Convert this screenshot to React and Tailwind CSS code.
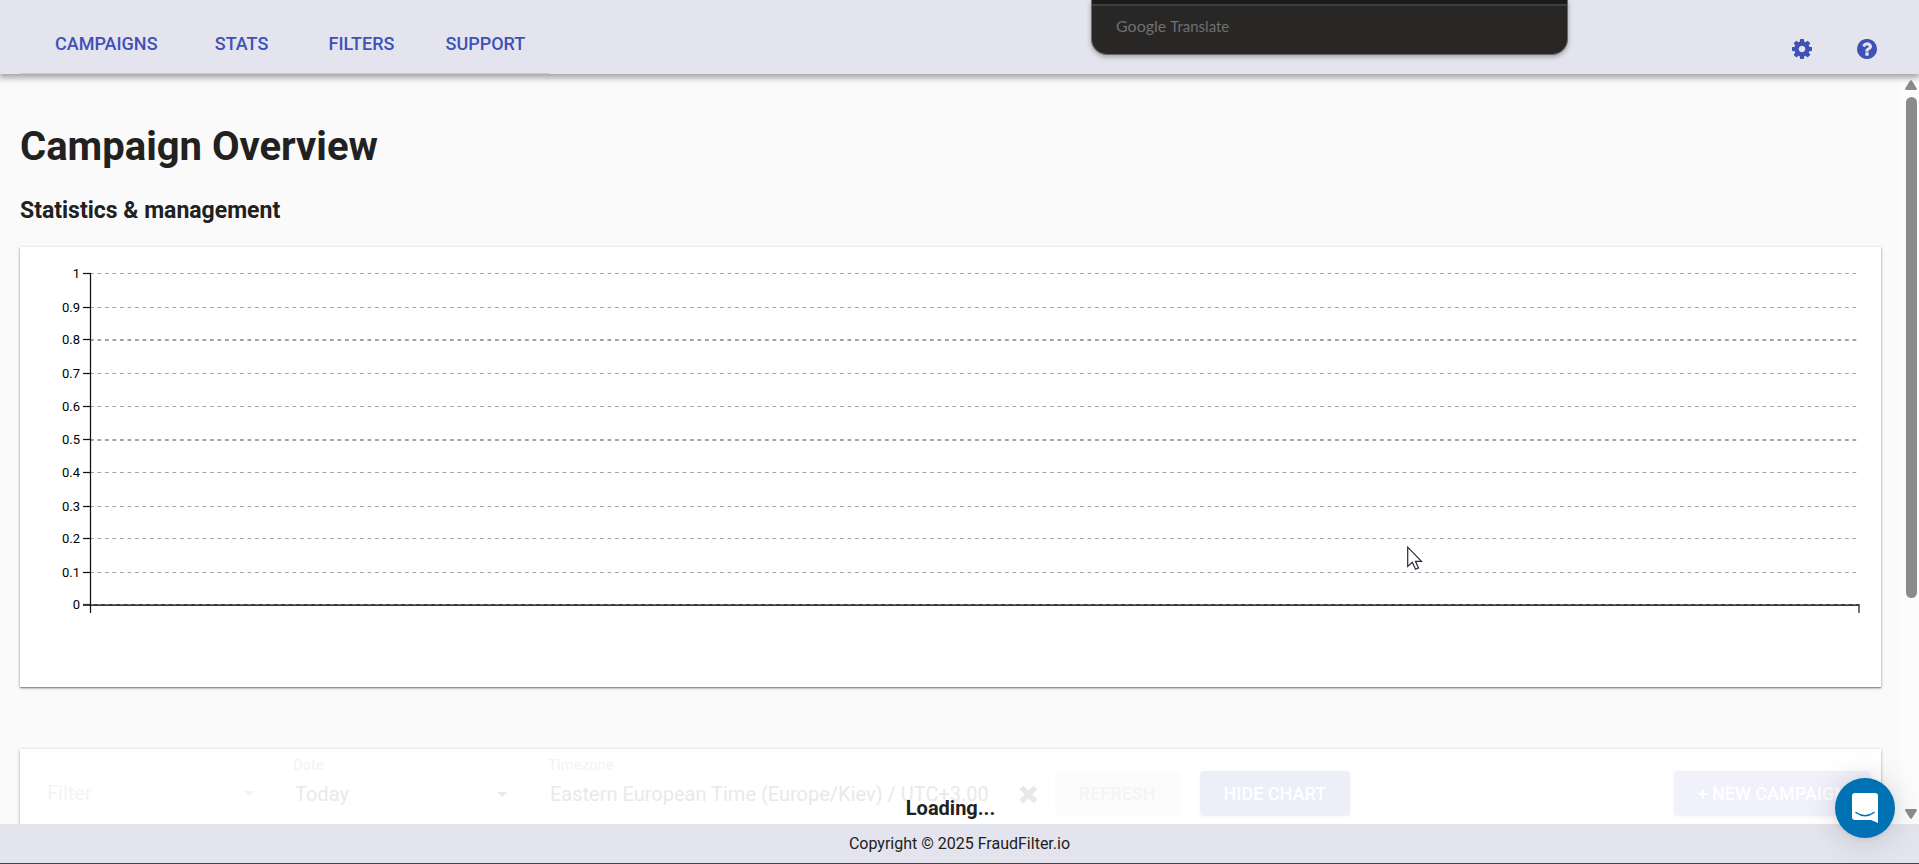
const NAV_ITEMS = ["Campaigns", "Stats", "Filters", "Support"];

// y positions of the horizontal grid lines, in chart units
const TICKS = [
  { label: "1", y: 8 },
  { label: "0.9", y: 42 },
  { label: "0.8", y: 74, width: 2 },
  { label: "0.7", y: 108 },
  { label: "0.6", y: 141 },
  { label: "0.5", y: 174, width: 2 },
  { label: "0.4", y: 207 },
  { label: "0.3", y: 241 },
  { label: "0.2", y: 273 },
  { label: "0.1", y: 307 },
  { label: "0", y: 339 },
];

function CogIcon() {
  return (
    <svg viewBox="128 128 1536 1536" className="size-5" fill="currentColor" aria-hidden="true">
      <path d="M1152 896q0-106-75-181t-181-75-181 75-75 181 75 181 181 75 181-75 75-181zm512-109v222q0 12-8 23t-20 13l-185 28q-19 54-39 91 35 50 107 138 10 12 10 25t-9 23q-27 37-99 108t-94 71q-12 0-26-9l-138-108q-44 23-91 38-16 136-29 186-7 28-36 28h-222q-14 0-24.500-8.500t-11.500-21.500l-28-184q-49-16-90-37l-141 107q-10 9-25 9-14 0-25-11-126-114-165-168-7-10-7-23 0-12 8-23 15-21 51-66.500t54-70.500q-27-50-41-99l-183-27q-13-2-21-12.500t-8-23.500v-222q0-12 8-23t19-13l186-28q14-46 39-92-40-57-107-138-10-12-10-24 0-10 9-23 26-36 98.500-107.500t94.500-71.500q13 0 26 10l138 107q44-23 91-38 16-136 29-186 7-28 36-28h222q14 0 24.500 8.500t11.500 21.500l28 184q49 16 90 37l142-107q9-9 24-9 13 0 25 10 129 119 165 170 7 8 7 22 0 12-8 23-15 21-51 66.500t-54 70.500q26 50 41 98l183 28q13 2 21 12.500t8 23.500z" />
    </svg>
  );
}

function HelpIcon() {
  return (
    <svg viewBox="128 128 1536 1536" className="size-5" fill="currentColor" aria-hidden="true">
      <path d="M1024 1376v-192q0-14-9-23t-23-9h-192q-14 0-23 9t-9 23v192q0 14 9 23t23 9h192q14 0 23-9t9-23zm256-672q0-88-55.500-163t-138.500-116-170-41q-243 0-371 213-15 24 8 42l132 100q7 6 19 6 16 0 25-12 53-68 86-92 34-24 86-24 48 0 85.500 26t37.500 59q0 38-20 61t-68 45q-63 28-115.500 86.500t-52.500 125.500v36q0 14 9 23t23 9h192q14 0 23-9t9-23q0-19 21.500-49.500t54.500-49.500q32-18 49-28.500t46-35 44.500-48 28-60.500 12.500-81zm384 192q0 209-103 385.500t-279.500 279.500-385.500 103-385.500-103-279.500-279.500-103-385.500 103-385.500 279.500-279.500 385.500-103 385.500 103 279.500 279.500 103 385.500z" />
    </svg>
  );
}

function ClearIcon() {
  return (
    <svg viewBox="302 366 1188 1188" className="size-[17px]" fill="currentColor" aria-hidden="true">
      <path d="M1490 1322q0 40-28 68l-136 136q-28 28-68 28t-68-28l-294-294-294 294q-28 28-68 28t-68-28l-136-136q-28-28-28-68t28-68l294-294-294-294q-28-28-28-68t28-68l136-136q28-28 68-28t68 28l294 294 294-294q28-28 68-28t68 28l136 136q28 28 28 68t-28 68l-294 294 294 294q28 28 28 68z" />
    </svg>
  );
}

function CaretIcon() {
  return (
    <svg viewBox="0 0 10 5" className="pointer-events-none h-[5px] w-2.5" fill="currentColor" aria-hidden="true">
      <path d="M0 0h10l-5 5z" />
    </svg>
  );
}

function Header() {
  return (
    <header className="relative z-10 flex h-[74px] shrink-0 items-end justify-between bg-[#e4e4ee] pr-[42px] pl-5 shadow-[0_3px_6px_1px_rgba(0,0,0,0.34)]">
      <nav className="flex h-[60px] border-b border-[#c8c8ce] pl-[11px]">
        {NAV_ITEMS.map((item) => (
          <a
            key={item}
            href="#"
            className="flex min-w-[120px] justify-center px-6 pt-[18px] text-lg/6 font-medium text-[#3f51b5] uppercase"
          >
            {item}
          </a>
        ))}
      </nav>
      <div className="flex gap-[45px] pb-[15px] text-[#3f51b5]">
        <button type="button" aria-label="Settings">
          <CogIcon />
        </button>
        <button type="button" aria-label="Help">
          <HelpIcon />
        </button>
      </div>
      <TranslatePopup />
    </header>
  );
}

function TranslatePopup() {
  return (
    <div className="absolute top-0 right-[351px] h-[55px] w-[477px] overflow-hidden rounded-b-2xl border border-t-0 border-[#6b6867] bg-[#282725] shadow-[0_2px_5px_rgba(0,0,0,0.3)]">
      <div className="h-1.5 border-b-2 border-[#3c4043] bg-[#1c1b1a]" />
      <p className="flex items-baseline gap-1 px-6 pt-2 font-[Lato,sans-serif] leading-6 text-[#6d7075]">
        <span className="text-base/6">Google</span>
        <span className="text-[15px]/6">Translate</span>
      </p>
    </div>
  );
}

function Chart() {
  return (
    <section className="h-[440px] bg-white pt-[18px] pr-[22px] pl-10 shadow-[0_1px_3px_rgba(0,0,0,0.35),0_1px_1px_rgba(0,0,0,0.25)]">
      <svg className="h-[380px] w-full overflow-visible" role="img" aria-label="Campaign chart">
        {TICKS.map(({ label, y }) => (
          <g key={label}>
            <text x="20" y={y + 5} textAnchor="end" className="fill-black text-[13px]">
              {label}
            </text>
            <line x1="23" x2="31" y1={y + 0.5} y2={y + 0.5} stroke="#111" strokeWidth="1.25" />
          </g>
        ))}
        <line x1="23" x2="100%" y1="340" y2="340" stroke="#3a3a3c" strokeWidth="2" />
        {TICKS.map(({ label, y, width = 1 }) => (
          <line
            key={label}
            x1="30"
            x2="100%"
            y1={y + width / 2}
            y2={y + width / 2}
            stroke={label === "0" ? "#777" : "#a3a3a3"}
            strokeWidth={width}
            strokeDasharray="3.75 3.75"
          />
        ))}
        <line x1="30.5" x2="30.5" y1="8" y2="348" stroke="#111" strokeWidth="1.25" />
        <line x1="100%" x2="100%" y1="339" y2="348" stroke="#444" strokeWidth="1.5" />
      </svg>
    </section>
  );
}

function Toolbar() {
  return (
    <section className="flex h-60 items-start bg-white pt-1.5 pr-2.5 pl-[27px] text-[#e9e9e9] shadow-[0_1px_3px_rgba(0,0,0,0.35)]">
      <div className="flex w-[207px] items-center pt-6 text-[#f4f4f4]">
        <select aria-label="Filter" className="h-7 flex-1 appearance-none bg-transparent text-xl/7">
          <option>Filter</option>
        </select>
        <CaretIcon />
      </div>
      <div className="ml-[39px] w-[214px]">
        <label htmlFor="date" className="block text-[15px]/5 text-[#f3f3f3]">
          Date
        </label>
        <div className="mt-[5px] flex items-center pl-0.5">
          <select id="date" className="h-7 flex-1 appearance-none bg-transparent text-xl/7">
            <option>Today</option>
          </select>
          <CaretIcon />
        </div>
      </div>
      <div className="ml-[41px] w-[489px]">
        <label htmlFor="timezone" className="block text-[15px]/5 text-[#f3f3f3]">
          Timezone
        </label>
        <div className="mt-[5px] flex items-center pl-0.5">
          <input
            id="timezone"
            className="h-7 min-w-0 flex-1 bg-transparent text-xl/7"
            defaultValue="Eastern European Time (Europe/Kiev) / UTC+3.00"
          />
          <button type="button" aria-label="Clear timezone">
            <ClearIcon />
          </button>
        </div>
      </div>
      <div className="mt-4 flex flex-1 gap-5 pl-[18px] text-lg/6 font-medium">
        <button type="button" className="h-[45px] rounded-sm bg-[#fcfcfc] px-6 text-[#f4f4f4] uppercase">
          Refresh
        </button>
        <button
          type="button"
          className="h-[45px] rounded-sm bg-[#eceef8] px-6 text-white uppercase shadow-[0_1px_4px_rgba(0,0,0,0.04)]"
        >
          Hide chart
        </button>
        <button
          type="button"
          className="ml-auto h-[45px] rounded-sm bg-[#f1f1fb] px-6 text-white uppercase shadow-[0_1px_4px_rgba(0,0,0,0.04)]"
        >
          + New campaign
        </button>
      </div>
    </section>
  );
}

function Scrollbar() {
  return (
    <div className="flex w-[18px] shrink-0 flex-col items-center bg-[#fcfcfc] pt-1.5 pr-0.5 pb-[5px] pl-1 text-[#8b8b8b]" aria-hidden="true">
      <svg viewBox="0 0 12 10" className="h-2.5 w-3" fill="currentColor">
        <path d="M5 .8q1-1.200 2 0l4.700 7.400q.7 1.800-1 1.800H1.300q-1.700 0-1-1.800z" />
      </svg>
      <div className="flex flex-1 flex-col py-[7px]">
        <div className="h-[71%] w-[11px] rounded-full bg-[#8b8b8b]" />
      </div>
      <svg viewBox="0 0 12 10" className="h-2.5 w-3" fill="currentColor">
        <path d="M5 9.200q1 1.200 2 0l4.700-7.400q.7-1.800-1-1.800H1.300q-1.700 0-1 1.800z" />
      </svg>
    </div>
  );
}

function ChatLauncher() {
  return (
    <button
      type="button"
      aria-label="Open chat"
      className="absolute right-6 bottom-[26px] z-20 flex size-[60px] items-center justify-center rounded-full bg-[#0071b2] shadow-[0_1px_6px_rgba(0,0,0,0.06),0_2px_32px_rgba(0,0,0,0.16)]"
    >
      <svg viewBox="0 0 26 30" className="h-[30px] w-[26px]" aria-hidden="true">
        <path d="M3 0h20q3 0 3 3v27l-7-3H3q-3 0-3-3V3q0-3 3-3z" fill="#fff" />
        <path d="M4 19.500q9 6.500 18 0" fill="none" stroke="#0071b2" strokeWidth="1.5" strokeLinecap="round" />
      </svg>
    </button>
  );
}

function Cursor() {
  return (
    <svg viewBox="0 0 16 25" className="absolute top-[546px] left-[1407px] z-20 h-[25px] w-4" aria-hidden="true">
      <path
        d="M.7 1.200v19.300l4.600-4.200 3.200 7 3-1.400-3-6.600h6z"
        fill="#fff"
        stroke="#2a2a38"
        strokeWidth="1.2"
      />
    </svg>
  );
}

export default function App() {
  return (
    <div className="relative flex h-screen flex-col overflow-hidden bg-[#fafafa] font-[Roboto,sans-serif] text-[#212121]">
      <Header />
      <div className="relative flex min-h-0 flex-1">
        <main className="relative min-w-0 flex-1 overflow-hidden px-5">
          <h1 className="pt-[49px] text-[40px]/12 font-bold">Campaign Overview</h1>
          <h2 className="mt-6 mb-5 text-[23px]/8 font-bold">Statistics &amp; management</h2>
          <Chart />
          <div className="mt-[62px]">
            <Toolbar />
          </div>
          <p className="absolute inset-x-0 bottom-1 text-center text-xl/6 font-bold">Loading...</p>
        </main>
        <Scrollbar />
      </div>
      <footer className="relative z-10 h-10 shrink-0 border-b border-[#41414b] bg-[#e4e4ee] pt-2 text-center text-base/6">
        Copyright © 2025 FraudFilter.io
      </footer>
      <ChatLauncher />
      <Cursor />
    </div>
  );
}
